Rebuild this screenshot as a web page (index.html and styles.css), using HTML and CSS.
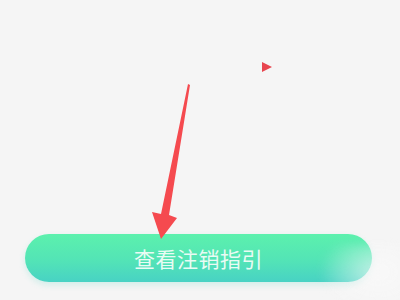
FILE: index.html
```html
<!DOCTYPE html>
<html lang="zh-CN">
<head>
  <meta charset="UTF-8">
  <meta name="viewport" content="width=device-width, initial-scale=1.0">
  <title>查看注销指引</title>
  <link rel="stylesheet" href="styles.css">
</head>
<body>
  <div class="page">
    <div class="content"></div>
    <div class="footer">
      <button class="guide-btn">查看注销指引</button>
    </div>

    <!-- 标注箭头 -->
    <svg class="mark" width="400" height="300" viewBox="0 0 400 300">
      <path d="M188 84 L190 85 L169 215 L177 218 L161 239 L152 212 L161 214 Z" fill="#f54a4f"/>
      <path d="M262 62 L272 67 L262 72 Z" fill="#e8464f"/>
    </svg>
    <div class="watermark"></div>
  </div>
</body>
</html>
```

FILE: styles.css
```css
body {
  margin: 0;
  padding: 0;
  background-color: #f5f5f5;
  font-family: "Noto Sans CJK SC", "Liberation Sans", sans-serif;
}
.page {
  position: relative;
  width: 400px;
  height: 300px;
  overflow: hidden;
  display: flex;
  flex-direction: column;
}
.content {
  flex: 1;
}
.footer {
  padding: 0 28px 18px 25px;
}
.guide-btn {
  display: block;
  width: 100%;
  height: 48px;
  border: none;
  border-radius: 24px;
  background: linear-gradient(180deg, #5cf1ad 0%, #53e4b6 55%, #48d2c4 100%);
  box-shadow: 0 3px 6px rgba(72, 210, 190, 0.2);
  color: #e9fbf4;
  font-family: "Noto Sans CJK SC", sans-serif;
  font-size: 21px;
  letter-spacing: 0.5px;
  padding: 0;
  cursor: pointer;
}
.mark {
  position: absolute;
  left: 0;
  top: 0;
  pointer-events: none;
}
.watermark {
  position: absolute;
  left: 318px;
  top: 244px;
  width: 100px;
  height: 70px;
  background: radial-gradient(ellipse at 60% 40%, rgba(250, 250, 250, 0.7), rgba(250, 250, 250, 0) 70%);
  filter: blur(4px);
}
```
